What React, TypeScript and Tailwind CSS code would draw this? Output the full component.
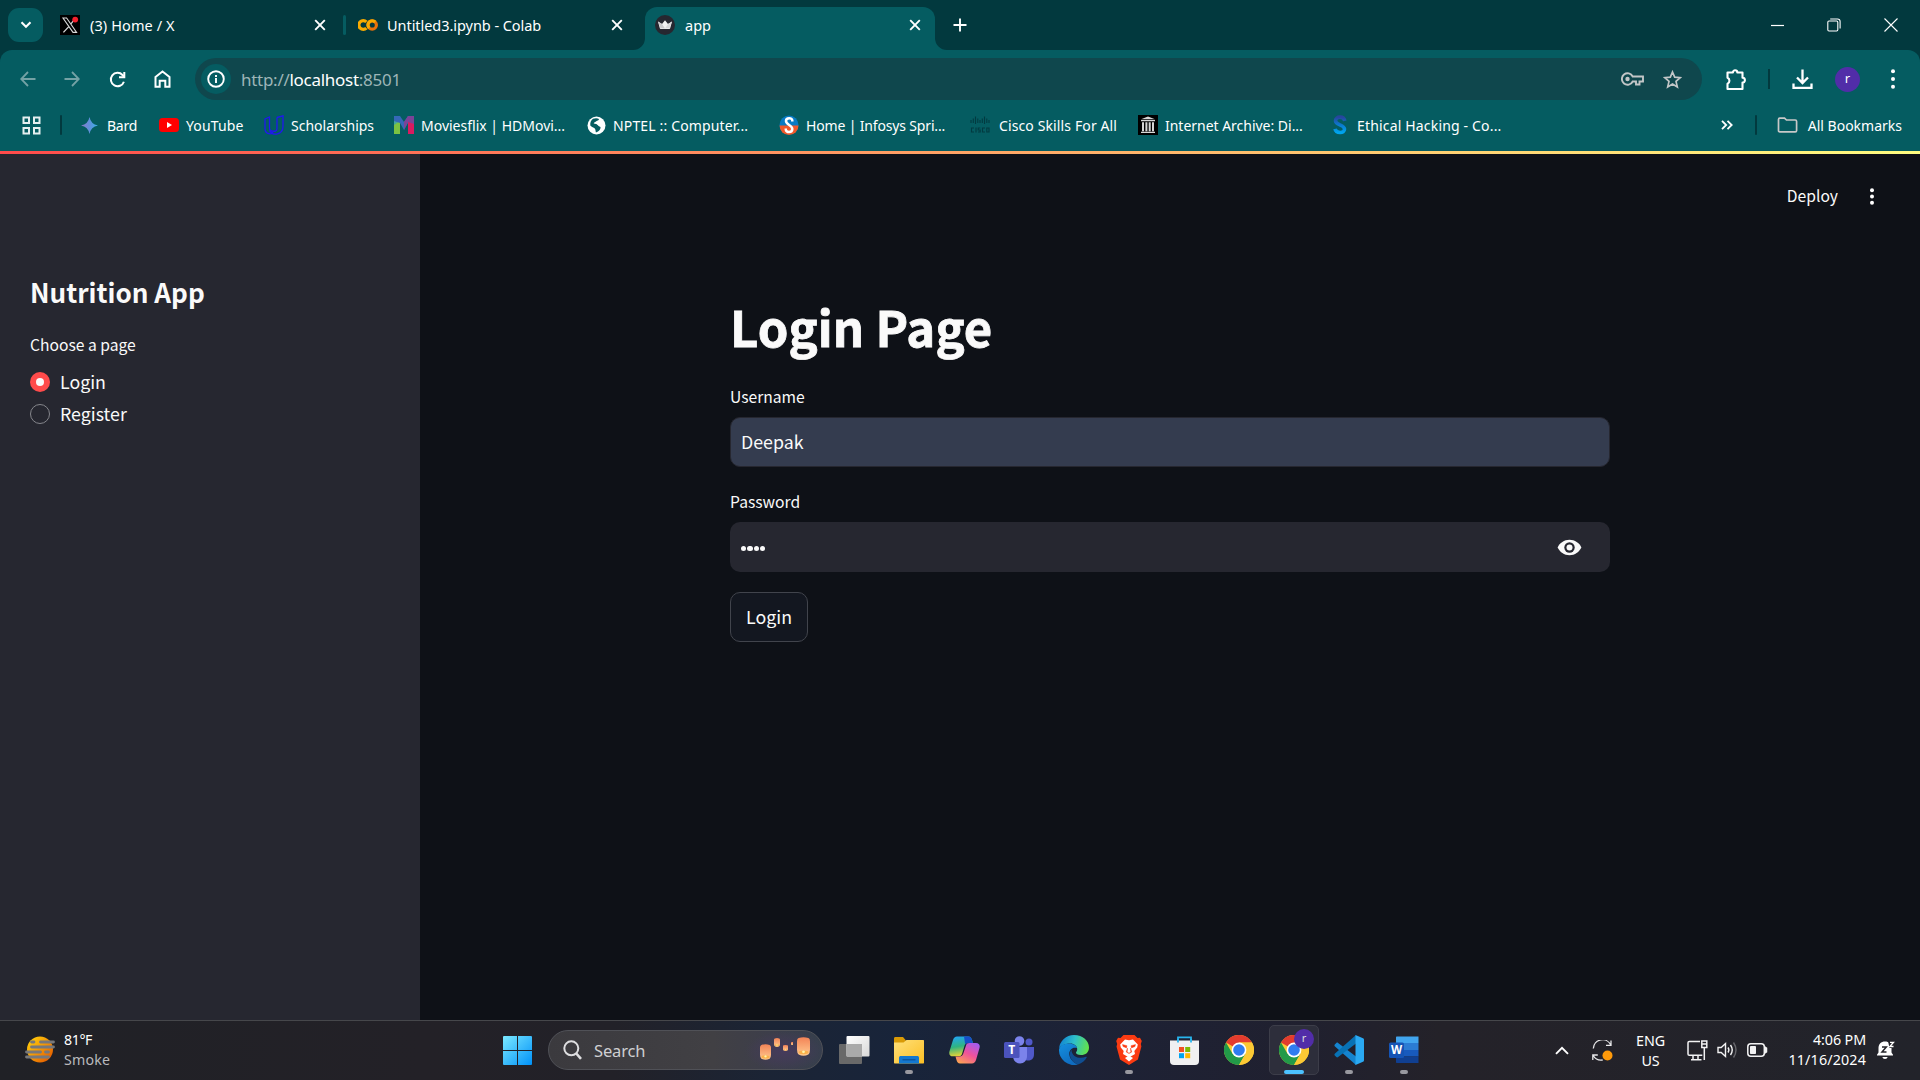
import React from "react";
import type { ReactNode } from "react";

const ui = "font-['Noto_Sans','Open_Sans',sans-serif]";
const source = "font-['Noto_Sans_CJK_SC',sans-serif]";

function Close() {
  return (
    <svg width="12" height="12" viewBox="0 0 12 12" stroke="#fff" strokeWidth="1.9" fill="none">
      <path d="M1.2 1.2l9.6 9.6M10.8 1.2l-9.6 9.6" />
    </svg>
  );
}

function Dots({ h = 22, r = 2 }: { h?: number; r?: number }) {
  return (
    <svg width="6" height={h} viewBox={`0 0 6 ${h}`} fill="#fff">
      <circle cx="3" cy={r + 0.2} r={r} />
      <circle cx="3" cy={h / 2} r={r} />
      <circle cx="3" cy={h - r - 0.2} r={r} />
    </svg>
  );
}

function XLogo() {
  return (
    <svg width="20" height="20" viewBox="0 0 20 20">
      <rect width="20" height="20" fill="#000" />
      <path d="M3 3h3.6l10 14.4H13z" fill="#000" stroke="#d8d8d8" strokeWidth="1.1" />
      <path d="M15.7 3.2L10.9 8.8M8.8 11.6L3.4 17.4" stroke="#d8d8d8" strokeWidth="1.3" />
      <circle cx="15.2" cy="4.6" r="2.9" fill="#f4212e" />
    </svg>
  );
}

function ColabLogo() {
  return (
    <svg width="20" height="20" viewBox="0 0 20 20" fill="none" strokeWidth="3.2">
      <path d="M8.4 6.9A4.4 4.4 0 1 0 8.4 13.1" stroke="#f9ab00" />
      <circle cx="14.2" cy="10" r="4.2" stroke="#e8710a" />
      <path d="M11.2 13A4.2 4.2 0 0 1 17.2 7" stroke="#f9ab00" />
    </svg>
  );
}

function CrownLogo() {
  return (
    <svg width="20" height="20" viewBox="0 0 20 20">
      <circle cx="10" cy="10" r="10" fill="#262730" />
      <path d="M3 6.6l4 2.4L10 5.3 13 9l4-2.4-1.8 6.6c-.1.6-.4.8-1 .8H5.8c-.6 0-.9-.2-1-.8z" fill="#f2f2f2" />
      <path d="M3 6.6l4 2.4 3 4.5-4.5-.3z" fill="#c9c9cc" />
      <path d="M17 6.6l-4 2.4-3 4.5 4.5-.3z" fill="#d8d8da" />
    </svg>
  );
}

function Tab({ icon, title, className }: { icon: ReactNode; title: ReactNode; className: string }) {
  return (
    <div className={`flex h-[36px] items-center ${className}`}>
      {icon}
      {title}
      <span className="ml-auto"><Close /></span>
    </div>
  );
}

function TabStrip() {
  return (
    <div className={`flex h-[50px] items-center bg-[#02393e] pl-2 text-[14.5px] text-white ${ui}`}>
      <div className="flex h-[34px] w-[35px] items-center justify-center rounded-[11px] bg-[#055c61]">
        <svg width="12" height="8" viewBox="0 0 12 8" fill="none" stroke="#fff" strokeWidth="2.1"><path d="M1.5 1.3L6 5.8l4.5-4.5" /></svg>
      </div>
      <Tab className="ml-[17px] w-[266px]" icon={<XLogo />} title={<span className="ml-2.5 pt-[2px] whitespace-nowrap tracking-[0.1px]">(3) Home / X</span>} />
      <div className="ml-[17px] h-5 w-[3px] rounded bg-[#055c61]" />
      <Tab className="ml-3 w-[265px]" icon={<ColabLogo />} title={<span className="ml-[9px] pt-[2px] whitespace-nowrap tracking-[-0.05px]">Untitled3.ipynb - Colab</span>} />
      <div className="ml-[10px] flex self-end">
        <svg className="self-end" width="12" height="12" viewBox="0 0 12 12" fill="#055c61"><path d="M12 0v12H0A12 12 0 0 0 12 0z" /></svg>
        <div className="flex h-[43px] w-[290px] items-start rounded-t-xl bg-[#055c61] pr-[14px] pl-[10px]">
          <Tab className="w-full" icon={<CrownLogo />} title={<span className="ml-[10px] pt-[2px]">app</span>} />
        </div>
        <svg className="self-end" width="12" height="12" viewBox="0 0 12 12" fill="#055c61"><path d="M0 0v12h12A12 12 0 0 1 0 0z" /></svg>
      </div>
      <svg className="ml-[6px]" width="14" height="14" viewBox="0 0 14 14" stroke="#fff" strokeWidth="1.9"><path d="M7 .5v13M.5 7h13" /></svg>
      <div className="ml-auto flex items-center">
        <svg width="13" height="13" viewBox="0 0 13 13" stroke="#fff" strokeWidth="1.2"><path d="M0 6.5h13" /></svg>
        <svg className="ml-[43px]" width="14" height="14" viewBox="0 0 14 14" fill="none" stroke="#fff" strokeWidth="1.1">
          <rect x=".8" y="3" width="10" height="10" rx="1.2" />
          <path d="M3.2 1h7.3a2.6 2.6 0 0 1 2.6 2.6v7" />
        </svg>
        <svg className="mr-[22px] ml-[43px]" width="14" height="14" viewBox="0 0 14 14" stroke="#fff" strokeWidth="1.1"><path d="M.5.5l13 13M13.5.5l-13 13" /></svg>
      </div>
    </div>
  );
}

function Toolbar() {
  return (
    <div className={`flex h-[58px] items-center rounded-t-[12px] bg-[#055c61] pl-5 ${ui}`}>
      <svg width="16" height="16" viewBox="0 0 16 16" fill="none" stroke="#74a2a5" strokeWidth="1.8"><path d="M15.5 8H1.5M8 1L1.2 8 8 15" /></svg>
      <svg className="ml-[28px]" width="16" height="16" viewBox="0 0 16 16" fill="none" stroke="#74a2a5" strokeWidth="1.8"><path d="M.5 8h14M8 1l6.8 7L8 15" /></svg>
      <svg className="ml-[29px]" width="17" height="17" viewBox="0 0 17 17" fill="none" stroke="#fff" strokeWidth="2"><path d="M14.9 10.7A6.7 6.7 0 1 1 13.5 4L15 5.6" /><path d="M15.3 1v5.2H10" /></svg>
      <svg className="ml-[28px]" width="17" height="18" viewBox="0 0 17 18" fill="none" stroke="#fff" strokeWidth="2"><path d="M1.5 7L8.5 1.5 15.5 7v9.8h-4.2v-6H5.7v6H1.5z" /></svg>
      <div className="ml-[24px] flex h-[42px] w-[1507px] items-center rounded-full bg-[#0f474d] pl-[6px] text-[17px]">
        <div className="flex size-[30px] items-center justify-center rounded-full bg-[#055c61]">
          <svg width="18" height="18" viewBox="0 0 18 18" fill="none" stroke="#fff" strokeWidth="1.9"><circle cx="9" cy="9" r="7.8" /><path d="M9 8v5M9 5v1.9" /></svg>
        </div>
        <span className="ml-[10px] pt-[2px] whitespace-nowrap tracking-[-0.28px] text-[#9db5b7]">http://<span className="text-white">localhost</span>:8501</span>
        <svg className="ml-auto" width="23" height="14" viewBox="0 0 23 14" fill="none" stroke="#c2c6c7" strokeWidth="1.9"><path d="M11.7 4.5A5.7 5.7 0 1 0 11.7 9.5H15V12.5H18.5V9.5H22V4.5z" /><circle cx="6.5" cy="7" r="2.2" fill="#c2c6c7" stroke="none" /></svg>
        <svg className="mr-5 ml-[19px]" width="19" height="19" viewBox="0 0 19 19" fill="none" stroke="#c2c6c7" strokeWidth="1.7"><path d="M9.5 2l2.2 5.2 5.6.5-4.3 3.7 1.3 5.5-4.8-2.9-4.8 2.9L6 11.4 1.7 7.7l5.6-.5z" /></svg>
      </div>
      <svg className="ml-[23px]" width="22" height="23" viewBox="0 0 22 23" fill="none" stroke="#fff" strokeWidth="2.1" strokeLinejoin="round"><path d="M2.5 4.5h5.4a2.2 2.2 0 0 1 4.4 0h5.2v5.3a2.2 2.2 0 0 1 0 4.8v6.4h-15v-5.2a3.3 3.3 0 0 0 0-6z" /></svg>
      <div className="ml-[21px] h-5 w-[2px] bg-[#02393e]" />
      <svg className="ml-[22px]" width="21" height="21" viewBox="0 0 21 21" fill="none" stroke="#fff" strokeWidth="2.3"><path d="M10.5.5v13M5 8.5l5.5 5.5L16 8.5M1.5 14.5v4.3h18v-4.3" /></svg>
      <div className="ml-[22px] flex size-[25px] items-center justify-center rounded-full bg-[#512da8] text-[13px] text-white">r</div>
      <div className="ml-[30px] flex"><Dots h={20} /></div>
    </div>
  );
}

function Bookmark({ icon, iconW, className, children }: { icon: ReactNode; iconW: string; className: string; children: ReactNode }) {
  return (
    <div className={`flex h-5 shrink-0 items-center ${iconW}`}>
      <span className="flex h-5 w-5 shrink-0 items-center justify-center">{icon}</span>
      <span className={`whitespace-nowrap ${className}`}>{children}</span>
    </div>
  );
}

function BookmarksBar() {
  return (
    <div className={`flex h-[43px] items-center bg-[#055c61] pb-[9px] pl-[22px] text-[14px] text-white ${ui}`}>
      <svg width="19" height="19" viewBox="0 0 19 19" fill="none" stroke="#e6eff0" strokeWidth="2"><path d="M1.5 1.5h5.5v5.5h-5.5zM12 1.5h5.5v5.5H12zM1.5 12h5.5v5.5h-5.5zM12 12h5.5v5.5H12z" /></svg>
      <div className="mr-[17px] ml-[19px] h-5 w-[2px] rounded bg-[#02393e]" />
      <Bookmark iconW="w-[80px]" className="ml-[8px] tracking-[-0.25px]" icon={
        <svg width="17" height="17" viewBox="0 0 17 17"><defs><linearGradient id="gem" x1="0" y1="0" x2="1" y2="0"><stop offset="0" stopColor="#8c79c9" /><stop offset=".55" stopColor="#5a93dd" /><stop offset="1" stopColor="#3ab0e8" /></linearGradient></defs><path d="M8.5 0Q9.8 7.200 17 8.500 9.800 9.800 8.500 17 7.200 9.800 0 8.500 7.200 7.200 8.500 0z" fill="url(#gem)" /></svg>
      }>Bard</Bookmark>
      <Bookmark iconW="w-[105px]" className="ml-[7px] tracking-[0.15px]" icon={
        <svg width="20" height="14" viewBox="0 0 20 14"><rect width="20" height="14" rx="3.5" fill="#f00" /><path d="M8 4l5 3-5 3z" fill="#fff" /></svg>
      }>YouTube</Bookmark>
      <Bookmark iconW="w-[130px]" className="ml-[7px] tracking-[0px]" icon={
        <svg width="20" height="20" viewBox="0 0 20 20" fill="none" stroke="#2018ee" strokeWidth="1.3"><path d="M1 4l4.5-2v11c0 2.5 2 3.5 4 3.200-1 2-3 2.800-4.500 2.500C2.500 18.200 1 16 1 13.500zM13 2.500L19 .8v10.700c0 4-2.800 6.800-6.300 7.600-3.700.6-7.200-1.400-7.200-5.300M13 2.500v11c0 2.200-1.800 3.200-4 2.700" /></svg>
      }>Scholarships</Bookmark>
      <Bookmark iconW="w-[192px]" className="ml-[7px] tracking-[0px]" icon={
        <svg width="20" height="18" viewBox="0 0 20 18"><path d="M0 0h6v18H0z" fill="#44a5a0" /><path d="M0 9l6-4v13H0z" fill="#7cc242" /><path d="M0 0h6l4 6 4-6v7l-4 7-4-7L0 5z" fill="#3568b8" /><path d="M14 0h6v18h-6z" fill="#d81b60" /><path d="M14 0h6v8l-6-2-4 8V6z" fill="#7b4397" /></svg>
      }>Moviesflix | HDMovi...</Bookmark>
      <Bookmark iconW="w-[193px]" className="ml-[7px] tracking-[0.15px]" icon={
        <svg width="19" height="19" viewBox="0 0 19 19"><circle cx="9.5" cy="9.5" r="9" fill="#fff" /><path d="M6 2.800c2-.8 4.800-.7 6 .2-.2 1.500-1.800 1.600-2.700 2.200-.8 1-2.300.9-2.600 2.200 1.600.6 3.800.3 4.400 2.200.4 1.200 2.200.6 2.500 1.800-.2 2.200-2.400 4.600-4.800 4.800-.3-1.400-.2-2.600-1-3.600-1.200-1-3-1.500-4.500-3C3 6.500 4 4 6 2.800z" fill="#055c61" /><path d="M7.500 6.800c1.500-.8 3-.4 4.500.4l-1 1.200z" fill="#fff" /></svg>
      }>NPTEL :: Computer...</Bookmark>
      <Bookmark iconW="w-[191px]" className="ml-[7px] tracking-[-0.16px]" icon={
        <svg width="20" height="20" viewBox="0 0 20 20"><circle cx="10" cy="10" r="9.5" fill="#087bc4" /><path d="M.5 10.500h19a9.500 9.500 0 0 1-19 0z" fill="#f1592a" /><path d="M13.300 6.500V5.500c0-3.200-6.300-3.200-6.300.5 0 3.800 6.300 4.200 6.300 8 0 4-6.500 3.800-6.500.5v-1" fill="none" stroke="#fff" strokeWidth="2.500" /></svg>
      }>Home | Infosys Spri...</Bookmark>
      <Bookmark iconW="w-[168px]" className="ml-[9px] tracking-[0.12px]" icon={
        <svg width="20" height="18" viewBox="0 0 20 18" stroke="#023a40" strokeWidth="1.1" fill="none"><path d="M1 4v3M3.300 2.500v4.500M5.500.5v7.500M7.800 2.500v4.500M10 4v3M12.300 2.500v4.500M14.500.5v7.500M16.800 2.500v4.500M19 4v3M4 12H1.500v4H4M6 11.500v5M10.300 12H8.200v2h2v2H8M15 12h-2.500v4H15M16.800 12h2.200v4h-2.200z" /></svg>
      }>Cisco Skills For All</Bookmark>
      <Bookmark iconW="w-[192px]" className="ml-[7px] tracking-[-0.02px]" icon={
        <svg width="20" height="20" viewBox="0 0 20 20"><rect width="20" height="20" fill="#000" /><path d="M10 1.500l7 2.700H3zM3 5h14v1.200H3zM4 7.200h2v9H4zM7.400 7.200h2v9h-2zM10.700 7.200h2v9h-2zM14 7.200h2v9h-2zM3 16.800h14V18H3z" fill="#d6d6d6" /></svg>
      }>Internet Archive: Di...</Bookmark>
      <Bookmark iconW="w-[180px]" className="ml-[7px] tracking-[0.17px]" icon={
        <svg width="14" height="20" viewBox="0 0 14 20"><defs><linearGradient id="eth" x1="0" y1="0" x2="0" y2="1"><stop offset="0" stopColor="#27459d" /><stop offset=".5" stopColor="#0b79cd" /><stop offset="1" stopColor="#00a4ee" /></linearGradient></defs><path d="M11.800 5.800C10.800.8 2.500 1 2.500 5.800c0 4.500 9 3.500 9 8.300 0 4.700-8.500 4.500-9.500-.2" fill="none" stroke="url(#eth)" strokeWidth="3.600" /></svg>
      }>Ethical Hacking - Co...</Bookmark>
      <div className="mr-[18px] ml-auto flex items-center">
        <svg width="12" height="10" viewBox="0 0 12 10" fill="none" stroke="#fff" strokeWidth="1.8"><path d="M1 .8L5.200 5 1 9.200M6.500.8L10.700 5 6.500 9.200" /></svg>
        <div className="mr-[20px] ml-[22px] h-5 w-[2px] rounded bg-[#02393e]" />
        <svg width="21" height="16" viewBox="0 0 21 16" fill="none" stroke="#c8c8c8" strokeWidth="1.7"><path d="M1.500 2.500c0-.9.4-1.400 1.300-1.400h4.700L9.500 3h8.700c.9 0 1.400.5 1.400 1.400v9c0 .9-.5 1.400-1.400 1.400H2.800c-.9 0-1.300-.5-1.300-1.400z" /></svg>
        <span className="ml-[10px] whitespace-nowrap">All Bookmarks</span>
      </div>
    </div>
  );
}

function Sidebar() {
  return (
    <aside className="w-[420px] shrink-0 bg-[#262730] pt-[118px] pl-[30px]">
      <h2 className="text-[26.1px] leading-[40px] font-bold">Nutrition App</h2>
      <p className="mt-[21px] text-[15.65px] leading-[24px]">Choose a page</p>
      <div className="mt-[9px] flex h-[32px] items-center text-[17.8px]">
        <span className="flex size-5 items-center justify-center rounded-full bg-[#ff4b4b]"><span className="size-2 rounded-full bg-[#fafafa]" /></span>
        <span className="ml-[10px] pb-[2px] leading-[30px]">Login</span>
      </div>
      <div className="flex h-[32px] items-center text-[17.8px]">
        <span className="size-5 rounded-full border border-[#85868c] bg-[#262730]" />
        <span className="ml-[10px] pb-[2px] leading-[30px]">Register</span>
      </div>
    </aside>
  );
}

function Main() {
  return (
    <main className="flex-1">
      <div className="flex h-[84px] items-center justify-end pr-[45px] text-[15.65px]">
        <span>Deploy</span>
        <span className="ml-[31px]"><Dots h={17} r={2} /></span>
      </div>
      <div className="ml-[310px] w-[880px] pt-[55px]">
        <h1 className="text-[49px] leading-[66px] font-bold tracking-[0.1px] [-webkit-text-stroke:0.8px_#fafafa]">Login Page</h1>
        <div className="mt-[26px] text-[15.65px] leading-[24px]">Username</div>
        <div className="mt-[8px] flex h-[50px] items-center rounded-[10px] border border-[#262730] bg-[#343c4f] pb-[2px] pl-[10px] text-[17.8px]">Deepak</div>
        <div className="mt-[23px] text-[15.65px] leading-[24px]">Password</div>
        <div className="mt-[8px] flex h-[50px] items-center rounded-[10px] bg-[#262730] pr-[28px] pl-[11px]">
          <div className="mt-[3px] flex gap-[1.2px]">
            {[0, 1, 2, 3].map((i) => <span key={i} className="size-[5.2px] rounded-full bg-[#fafafa]" />)}
          </div>
          <svg className="ml-auto" width="25" height="17" viewBox="0 0 25 17"><path d="M12.500.8C7.200.8 2.700 4 .6 8.500 2.700 13 7.200 16.200 12.500 16.200S22.300 13 24.400 8.500C22.300 4 17.800.8 12.500.8z" fill="#fafafa" /><circle cx="12.500" cy="8.500" r="5.200" fill="#262730" /><circle cx="12.500" cy="8.500" r="3" fill="#fafafa" /></svg>
        </div>
        <button className="mt-[20px] flex h-[50px] w-[78px] items-center justify-center rounded-[10px] border border-[#41444c] bg-[#131720] pb-[2px] text-[17.8px]">Login</button>
      </div>
    </main>
  );
}

function ChromeIcon() {
  return (
    <svg width="30" height="30" viewBox="0 0 30 30">
      <circle cx="15" cy="15" r="15" fill="#fcc934" />
      <path d="M15 15L2 7.500A15 15 0 0 1 28 7.500H15z" fill="#e33b2e" />
      <path d="M2 7.500A15 15 0 0 0 15 30L21.500 18.700 15 15 8.500 18.700z" fill="#229a48" />
      <path d="M15 7.500H28A15 15 0 0 1 15 30l6.500-11.200z" fill="#fcc934" />
      <circle cx="15" cy="15" r="7.400" fill="#fff" />
      <circle cx="15" cy="15" r="5.800" fill="#2f7cf0" />
    </svg>
  );
}

function TaskItem({ children, mark, active }: { children: ReactNode; mark?: boolean; active?: boolean }) {
  return (
    <div className={`relative flex size-[50px] shrink-0 items-center justify-center rounded-[5px] ${active ? "border border-[#3c3d49] bg-[#2d2e3b]" : ""}`}>
      {children}
      {mark && <span className="absolute bottom-[1px] left-[21px] h-1 w-2 rounded-full bg-[#98989f]" />}
      {active && <span className="absolute bottom-0 left-[14px] h-1 w-5 rounded-full bg-[#4cc2ff]" />}
    </div>
  );
}

function Lantern({ w, h }: { w: number; h: number }) {
  return (
    <svg width={w} height={h} viewBox="0 0 12 18" preserveAspectRatio="none">
      <path d="M1.500 1Q6-.6 10.500 1 12 1.500 12 4v8q0 3-1.500 4.500Q6 19 1.500 16.500 0 15 0 12V4Q0 1.500 1.500 1z" fill="url(#lan)" />
      <ellipse cx="6" cy="14.500" rx="4.500" ry="1.800" fill="#fbb04b" />
      <circle cx="6" cy="14" r="1.300" fill="#fff3a8" />
    </svg>
  );
}

function Taskbar() {
  return (
    <footer className={`flex h-[60px] items-center border-t border-[#46474b] bg-[linear-gradient(90deg,#202126_0%,#232127_22%,#222128_32%,#1b2435_40%,#18243a_47%,#1d2236_56%,#20202f_68%,#242229_75%,#22232a_100%)] pb-px text-white ${ui}`}>
      <div className="flex w-[503px] shrink-0 items-center pl-[25px]">
        <svg width="30" height="28" viewBox="0 0 30 28">
          <defs><linearGradient id="sun" x1="0" y1="0" x2="1" y2="1"><stop offset=".15" stopColor="#ffc60a" /><stop offset=".9" stopColor="#e35b00" /></linearGradient></defs>
          <circle cx="15" cy="13.500" r="13" fill="url(#sun)" />
          <path d="M6.500 6H9M15.500 6h13M6.500 11h22M1.500 16h14M20.500 16h3M1.500 21h22" stroke="#77787b" strokeWidth="2.800" strokeLinecap="round" />
        </svg>
        <div className="ml-[9px] pb-px text-[14.2px] leading-5"><div className="tracking-[-0.4px]">81°F</div><div className="tracking-[0.2px] text-[#b9b9bc]">Smoke</div></div>
      </div>
      <svg className="shrink-0" width="29" height="29" viewBox="0 0 29 29"><defs><linearGradient id="win" x1="0" y1="0" x2="1" y2="1"><stop stopColor="#7be9ff" /><stop offset="1" stopColor="#0091f8" /></linearGradient></defs><path d="M1 0h13v14H0V1a1 1 0 0 1 1-1zM15 0H28a1 1 0 0 1 1 1v13H15zM0 15h14V29H1a1 1 0 0 1-1-1zM15 15H29V28a1 1 0 0 1-1 1H15z" fill="url(#win)" /></svg>
      <div className="ml-4 flex h-10 w-[275px] shrink-0 items-center rounded-full border border-[#505157] bg-[radial-gradient(ellipse_40px_20px_at_236px_20px,#463a5c_0%,transparent_100%),linear-gradient(90deg,#3b3a3e_0%,#414044_60%,#3d3e4a_80%,#363f4c_100%)] pl-[14px]">
        <svg width="19" height="20" viewBox="0 0 19 20" fill="none" stroke="#dedee0" strokeWidth="2"><circle cx="8.300" cy="8.300" r="7" /><path d="M13.300 13.500l4.700 5.300" strokeWidth="2.600" /></svg>
        <span className="ml-[12px] pt-[2px] text-[16.5px] tracking-[-0.15px] text-[#cfcfd2]">Search</span>
        <div className="mr-[12px] ml-auto flex h-[26px] items-start gap-[3px]">
          <span className="mt-[7px]"><Lantern w={11} h={16} /></span>
          <span className="mt-[1px]"><Lantern w={6} h={9} /></span>
          <span className="mt-[8px]"><Lantern w={5} h={6} /></span>
          <span className="mt-[5px] mr-[1px]"><Lantern w={2.5} h={3} /></span>
          <span><Lantern w={13} h={19} /></span>
        </div>
        <svg className="w-0" height="0"><defs><linearGradient id="lan" x1="0" y1="0" x2="0" y2="1"><stop stopColor="#f38356" /><stop offset="1" stopColor="#ffcb91" /></linearGradient></defs></svg>
      </div>
      <div className="ml-[6px] flex gap-[5px]">
        <TaskItem><svg width="31" height="28" viewBox="0 0 31 28"><defs><linearGradient id="tv" x1="0" y1="0" x2="1" y2="1"><stop stopColor="#fff" /><stop offset="1" stopColor="#d9d9d9" /></linearGradient></defs><rect y="8" width="23" height="20" rx="1" fill="#696969" /><rect x="7.5" width="23" height="20.5" rx="1" fill="url(#tv)" /><path d="M7.5 8H23v12.500H7.500z" fill="#aaa" /></svg></TaskItem>
        <TaskItem mark><svg width="30" height="27" viewBox="0 0 30 27"><defs><linearGradient id="fo" x1="0" y1="0" x2="1" y2="1"><stop stopColor="#ffe07a" /><stop offset="1" stopColor="#fcbf24" /></linearGradient></defs><path d="M0 1.500C0 .5.500 0 1.500 0H9l3 3.500V8H0z" fill="#d99a06" /><path d="M0 5.500h9.500L12.500 3H29c.7 0 1 .4 1 1v21.500c0 .7-.3 1-1 1H1c-.7 0-1-.3-1-1z" fill="url(#fo)" /><path d="M5 26.500V21c0-1.400.7-2 2-2h16c1.400 0 2 .6 2 2v5.500z" fill="#1478d0" /><path d="M8.500 22.800h13" stroke="#0b4f96" strokeWidth="1.200" /></svg></TaskItem>
        <TaskItem><svg width="31" height="28" viewBox="0 0 31 28"><defs>
          <linearGradient id="cpa" x1=".3" y1="0" x2=".5" y2="1"><stop stopColor="#22a6f2" /><stop offset=".5" stopColor="#2fb481" /><stop offset="1" stopColor="#f7d62f" /></linearGradient>
          <linearGradient id="cpb" x1=".8" y1="0" x2=".2" y2="1"><stop stopColor="#a35cf0" /><stop offset=".5" stopColor="#f0529a" /><stop offset="1" stopColor="#fca253" /></linearGradient></defs>
          <path d="M8 .5h11.500c2 0 2.800 1.500 3.500 3.500l1 3h-5c-2 0-3 1-3.600 3L13 18c-.6 1.600-1.800 2.300-3.200 2.300H4c-3 0-4.300-2-3.500-5L4 4C4.700 1.800 6 .5 8 .5z" fill="url(#cpa)" />
          <path d="M15 .5h4.500c2 0 2.800 1.500 3.500 3.500l1 3h-5c-1.400 0-2.200.5-2.800 1.500z" fill="#164fc9" />
          <path d="M23 27.500H11c-2 0-2.800-1.500-3.500-3.500l-1-3.500h4c2 0 3.200-1 3.800-3l2.700-8c.6-1.800 1.600-2.500 3.200-2.500H27c3 0 4.300 2 3.500 5L27 24c-.8 2.300-2 3.500-4 3.500z" fill="url(#cpb)" /></svg></TaskItem>
        <TaskItem><svg width="30" height="28" viewBox="0 0 30 28"><circle cx="15.500" cy="5" r="4.800" fill="#7b83eb" /><circle cx="25" cy="6" r="3.500" fill="#5059c9" /><path d="M20 11h10v7c0 5-3 6.500-6 6.500s-5-2-5-5z" fill="#5059c9" /><path d="M9 11h14v9c0 4.500-3 7.500-7 7.500S9 24.500 9 20z" fill="#7b83eb" /><rect y="6" width="15.500" height="16" rx="1.500" fill="#4b53bc" /><text x="7.700" y="18" fill="#fff" fontSize="12" fontWeight="700" textAnchor="middle" fontFamily="Open Sans">T</text></svg></TaskItem>
        <TaskItem><svg width="30" height="30" viewBox="0 0 30 30"><defs><linearGradient id="ed" x1="0" y1=".3" x2="1" y2=".5"><stop stopColor="#0f80d4" /><stop offset=".5" stopColor="#2fc0c8" /><stop offset="1" stopColor="#62e34b" /></linearGradient><linearGradient id="ee" x1="0" y1="0" x2=".5" y2="1"><stop stopColor="#1490df" /><stop offset="1" stopColor="#0f6cc0" /></linearGradient></defs><path d="M0 14A15 15 0 0 1 15 0c9 0 15 6 15 12.500 0 5-3.500 7.500-8 7.500-3.500 0-5-1-5-2.200 0-1 1.200-1.500 1.200-3.800 0-3-3-5.500-7-5.500C5.500 8.500 1 11 0 14z" fill="url(#ed)" /><path d="M0 14.500C1 10.500 5.500 8.300 10 8.500c4 .1 7.500 2 8 4.500-4.500-1.500-8.200 2-7.700 6.500C10.800 24.500 15 28 19 29.500A15 15 0 0 1 0 14.500z" fill="url(#ee)" /><path d="M12.500 14.500c-3.500 4-1.500 12 6.500 15 4-1.300 7-3.700 8.700-7 .3-.7-.3-1-.9-.7-5 2.400-14.300 1-14.300-7.300z" fill="#104e91" /></svg></TaskItem>
        <TaskItem mark><svg width="26" height="30" viewBox="0 0 26 30"><path d="M7.500 0h11l3 3 2.500-.3 1.800 3.300-1 3 .6 2.500-3.500 13L13 30 4 24.500.5 11.500 1.200 9l-1-3L2 2.700l2.500.3z" fill="#fb3b12" /><path d="M13 5.300l4-.8 4.800 5-.6 3-2.900 3.500.7 3-6 3.500-6-3.500.7-3-2.900-3.500-.6-3 4.800-5z" fill="#fff" /><path d="M13 20.500l4 2.500-4 3.500L9 23z" fill="#fff" /><path d="M6.500 9.500l4.500 1.200-.5 2.200L7 11.500zM19.500 9.500L15 10.700l.5 2.200 3.500-1.400zM11.500 13l-1.300 4 2.800 1.500-1.800-1.800zM14.500 13l1.300 4-2.800 1.500 1.800-1.800z" fill="#fb3b12" stroke="#fb3b12" strokeWidth=".4" /></svg></TaskItem>
        <TaskItem><svg width="29" height="29" viewBox="0 0 29 29"><path d="M8 6V1.300h13V6" fill="none" stroke="#28b5ed" strokeWidth="1.800" /><path d="M0 4.500h29V25a4 4 0 0 1-4 4H4a4 4 0 0 1-4-4z" fill="#f0f0f1" /><path d="M8 6.500V3M21 6.500V3" stroke="#28b5ed" strokeWidth="1.800" /><path d="M9 11h5v5H9z" fill="#f25022" /><path d="M15.200 11h5v5h-5z" fill="#7fba00" /><path d="M9 17.200h5v5H9z" fill="#00a4ef" /><path d="M15.200 17.200h5v5h-5z" fill="#ffb900" /></svg></TaskItem>
        <TaskItem><ChromeIcon /></TaskItem>
        <TaskItem active><ChromeIcon /><span className="absolute top-[3px] left-[24px] flex size-5 items-center justify-center rounded-full bg-[#512da8] pb-[2px] text-[11px] text-[#ddd]">r</span></TaskItem>
        <TaskItem mark><svg width="30" height="30" viewBox="0 0 30 30"><path d="M22 30L1 11.500c-.7-.6-.7-1.300-.2-1.900L2.300 8c.6-.5 1.200-.5 1.800-.1L22 21.500z" fill="#1584cf" /><path d="M22 0L1 18.500c-.7.6-.7 1.300-.2 1.900L2.300 22c.6.5 1.200.5 1.800.1L22 8.500z" fill="#0872b5" /><path d="M21.500 0l7.500 3.300c.7.3 1 .8 1 1.500v20.400c0 .7-.3 1.200-1 1.500L21.500 30z" fill="#2aa9f2" /></svg></TaskItem>
        <TaskItem mark><svg width="30" height="28" viewBox="0 0 30 28"><path d="M8 .5h21.500V7H7V1.500c0-.7.3-1 1-1z" fill="#41a5ee" /><path d="M7 7h22.500v7H7z" fill="#2b7cd3" /><path d="M7 14h22.500v6.500H7z" fill="#185abd" /><path d="M7 20.500h22.500V27H8c-.7 0-1-.3-1-1z" fill="#103f91" /><rect y="6.500" width="15" height="15.500" rx="1.500" fill="#1554b5" /><text x="7.500" y="18.200" fill="#fff" fontSize="11.500" fontWeight="700" textAnchor="middle" fontFamily="Open Sans">W</text></svg></TaskItem>
      </div>
      <div className="mr-[25px] ml-auto flex items-center">
        <svg width="14" height="9" viewBox="0 0 14 9" fill="none" stroke="#fff" strokeWidth="1.9"><path d="M1 7.800L7 1.800l6 6" /></svg>
        <svg className="ml-[23px]" width="21" height="21" viewBox="0 0 21 21" fill="none" stroke="#e8e8ea" strokeWidth="1.3"><path d="M1.300 8.500A9.200 9.200 0 0 1 18.800 5M19 .5V5.300h-5M.8 20v-5h5M1.200 15.500a9.300 9.300 0 0 0 9.500 4.500" /><circle cx="15.500" cy="15.500" r="5" fill="#ff9a0a" stroke="none" /></svg>
        <div className="ml-[22px] w-[31px] pt-px text-center text-[14.3px] leading-5 tracking-[-0.1px]"><div>ENG</div><div>US</div></div>
        <svg className="ml-[21px]" width="21" height="21" viewBox="0 0 21 21" fill="none" stroke="#f2f2f3" strokeWidth="1.5"><path d="M13 1.500H2.300c-.8 0-1.300.5-1.300 1.300V14c0 .8.5 1.300 1.300 1.300h13M6 15.500v4M11 15.500v4M4 19.700h10.500M14.800 1h5v6.500h-5zM14.800 4h5M17.300 7.500V20" /></svg>
        <svg className="ml-[9px]" width="21" height="18" viewBox="0 0 21 18" fill="none" stroke="#f2f2f3" strokeWidth="1.4"><path d="M1 6.500h3.200L8.500 2.500v13L4.200 11.500H1z" /><path d="M11 6.500q1.800 2.500 0 5M13.500 4q3.500 5 0 10" /><path d="M16.500 1.500q5 7.500 0 15" stroke="#66666b" /></svg>
        <svg className="ml-[9px]" width="21" height="14" viewBox="0 0 21 14" fill="none" stroke="#f2f2f3" strokeWidth="1.5"><rect x=".8" y=".8" width="16.500" height="12.400" rx="3" /><rect x="3" y="3" width="6" height="8" rx=".8" fill="#f2f2f3" stroke="none" /><path d="M18.500 4.500v5l1-.7V5.200z" fill="#f2f2f3" /></svg>
        <div className="ml-[18px] w-[80px] text-right text-[14.3px] leading-5 whitespace-nowrap"><div className="tracking-[-0.1px]">4:06 PM</div><div className="tracking-[0.15px]">11/16/2024</div></div>
        <svg className="ml-[11px]" width="18" height="19" viewBox="0 0 18 19"><path d="M8 .5c4 0 6.500 2.700 6.500 6.500v4.500l1.500 2.300v.7H0v-.7l1.500-2.300V7C1.500 3.200 4 .5 8 .5zM5.300 16h5.400a2.800 2.800 0 0 1-5.400 0z" fill="#fff" /><path d="M11 0h7v7h-5.500z" fill="#232329" /><path d="M5 6h4.300L5 11h4.500" stroke="#232329" strokeWidth="1.5" fill="none" /><path d="M13 1.300h3.500L12.800 5.500h3.700" stroke="#fff" strokeWidth="1.3" fill="none" /></svg>
      </div>
    </footer>
  );
}

export default function App() {
  return (
    <div className="flex h-[1080px] w-[1920px] flex-col overflow-hidden bg-[#02393e]">
      <TabStrip />
      <Toolbar />
      <BookmarksBar />
      <div className="h-[3px] shrink-0 bg-[linear-gradient(90deg,#ff4b4b,#fffd80)]" />
      <div className={`flex min-h-0 flex-1 bg-[#0e1117] text-[#fafafa] ${source}`}>
        <Sidebar />
        <Main />
      </div>
      <Taskbar />
    </div>
  );
}
